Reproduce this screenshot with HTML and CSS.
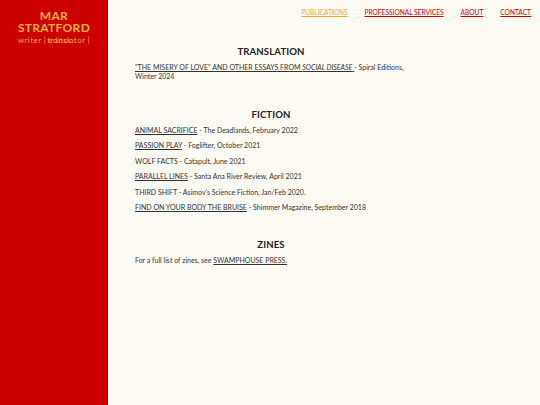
FILE: index.html
```html
<!DOCTYPE html>
<html>
<head>
<meta charset="utf-8">
<link rel="stylesheet" href="styles.css">
</head>
<body>
<div class="page">
  <aside class="sidebar">
    <div class="name">MAR<br>STRATFORD</div>
    <div class="tagline">writer |<span class="swap"><span class="ghost">editor</span>translator |</span></div>
  </aside>
  <main class="main">
    <nav class="nav">
      <a class="nav-link active" href="#">PUBLICATIONS</a>
      <a class="nav-link" href="#">PROFESSIONAL SERVICES</a>
      <a class="nav-link" href="#">ABOUT</a>
      <a class="nav-link" href="#">CONTACT</a>
    </nav>
    <div class="content">
      <section class="section">
        <h2 class="heading">TRANSLATION</h2>
        <p class="entry"><a href="#">"THE MISERY OF LOVE" AND OTHER ESSAYS FROM <em>SOCIAL DISEASE</em> </a> - Spiral Editions, Winter 2024</p>
      </section>
      <section class="section section-fiction">
        <h2 class="heading">FICTION</h2>
        <p class="entry"><a href="#">ANIMAL SACRIFICE</a> - The Deadlands, February 2022</p>
        <p class="entry"><a href="#">PASSION PLAY</a> - Foglifter, October 2021</p>
        <p class="entry">WOLF FACTS - Catapult, June 2021</p>
        <p class="entry"><a href="#">PARALLEL LINES</a> - Santa Ana River Review, April 2021</p>
        <p class="entry">THIRD SHIFT - Asimov's Science Fiction, Jan/Feb 2020.</p>
        <p class="entry"><a href="#">FIND ON YOUR BODY THE BRUISE</a> - Shimmer Magazine, September 2018</p>
      </section>
      <section class="section">
        <h2 class="heading">ZINES</h2>
        <p class="entry">For a full list of zines, see <a href="#">SWAMPHOUSE PRESS.</a></p>
      </section>
    </div>
  </main>
</div>
</body>
</html>
```
FILE: styles.css
```css
html, body {
  margin: 0;
  padding: 0;
  height: 100%;
}
body {
  background: #fdfbf4;
  font-family: Lato, "Open Sans", sans-serif;
  color: #333;
}
.page {
  display: flex;
  min-height: 100vh;
}
.sidebar {
  width: 108px;
  flex: none;
  background: #cc0000;
  color: #f6b43c;
  text-align: center;
  padding-top: 10px;
  box-sizing: border-box;
}
.name {
  font-family: Lato, sans-serif;
  font-weight: 700;
  font-size: 12px;
  line-height: 12px;
  letter-spacing: 0.3px;
}
.tagline {
  font-size: 8px;
  margin-top: 1px;
  letter-spacing: 0.45px;
  color: #f3a83a;
}
.swap {
  position: relative;
  margin-left: 1px;
}
.ghost {
  position: absolute;
  left: 1px;
  top: 0;
  opacity: 0.8;
}
.main {
  flex: 1;
  display: flex;
  flex-direction: column;
}
.nav {
  display: flex;
  justify-content: flex-end;
  gap: 17px;
  padding: 8px 9px 0 0;
}
.nav-link {
  font-size: 6.6px;
  color: #c40000;
  text-decoration: underline;
}
.nav-link.active {
  color: #f3a633;
}
.content {
  width: 272px;
  margin-left: 27px;
  padding-top: 30px;
}
.section {
  margin-bottom: 28px;
}
.section-fiction {
  margin-bottom: 27px;
}
.heading {
  text-align: center;
  font-size: 9.6px;
  font-weight: 700;
  color: #222;
  margin: 0 0 6px;
  letter-spacing: 0.1px;
}
.entry {
  font-size: 7px;
  line-height: 9px;
  margin: 0 0 6.4px;
}
.entry a {
  color: #333;
  text-decoration: underline;
}
.entry em {
  font-style: italic;
}
```
